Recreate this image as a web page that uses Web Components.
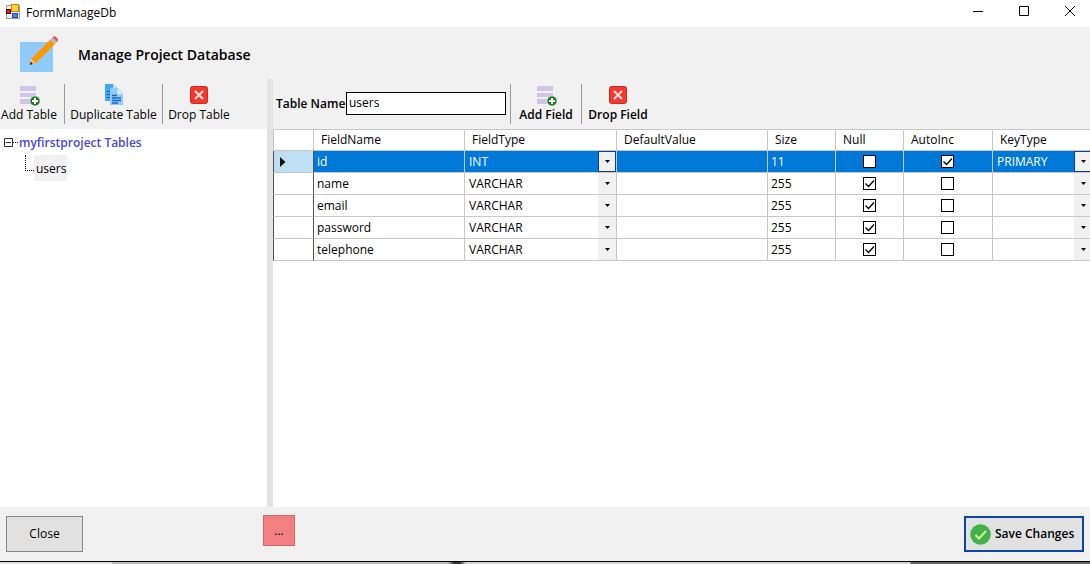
<!DOCTYPE html>
<html lang="en">
<head>
<meta charset="utf-8">
<title>FormManageDb</title>
<style>
html,body{margin:0;height:100%}
body{font:12px/16px "Open Sans","Noto Sans",sans-serif;color:#000;background:#f1f1f1}
</style>
</head>
<body>
<db-window>
  <title-bar slot="title">FormManageDb</title-bar>
  <page-header slot="header">Manage Project Database</page-header>
  <tool-strip slot="side">
    <tool-button icon="add" style="--w:56px">Add Table</tool-button>
    <tool-button icon="copy" style="--w:83px">Duplicate Table</tool-button>
    <tool-button icon="drop" style="--w:58px">Drop Table</tool-button>
  </tool-strip>
  <table-tree slot="side" heading="myfirstproject Tables">users</table-tree>
  <tool-strip slot="main" class="fields">
    <name-field value="users">Table Name</name-field>
    <tool-button icon="add" strong style="--w:56px">Add Field</tool-button>
    <tool-button icon="drop" strong style="--w:58px">Drop Field</tool-button>
  </tool-strip>
  <field-grid slot="main"></field-grid>
  <action-bar slot="footer"></action-bar>
</db-window>
<script>
const define = (name, html, setup) => {
  const t = document.createElement('template');
  t.innerHTML = html;
  customElements.define(name, class extends HTMLElement {
    constructor() {
      super();
      this.attachShadow({mode: 'open'}).append(t.content.cloneNode(true));
    }
    connectedCallback() { if (setup && !this.ready) { this.ready = true; setup(this, this.shadowRoot); } }
  });
};

const icons = {
  add: `<svg width="22" height="22" viewBox="0 0 22 22"><path fill="#d1c4e9" d="M2 2h16v5H2zM2 9h16v4H2zM2 15h16v5H2z"/><circle cx="17" cy="17" r="5" fill="#1b7a22" stroke="#f1f1f1" stroke-width=".6"/><path d="M17 14v6M14 17h6" stroke="#fff" stroke-width="2"/></svg>`,
  copy: `<svg width="22" height="22" viewBox="0 0 22 22"><path fill="#42a5f5" d="M2 0h8l4 4v13H2z"/><path fill="#bbdefb" d="M10 0l4 4h-4z"/><path stroke="#1565c0" d="M4 7.500h4M4 10.500h4M4 13.500h4"/><path fill="#90caf9" d="M7 4h8l5 5v12H7z"/><path fill="#e1f5fe" d="M14.500 4.500L20 10h-5.500z"/><path stroke="#1565c0" stroke-width="1.300" d="M9 11.500h5M9 14h9M9 16.500h9M9 19h6"/></svg>`,
  drop: `<svg width="22" height="22" viewBox="0 0 22 22"><rect x="2.500" y="2.500" width="17" height="17" rx="2" fill="#f4382e" stroke="#d32820"/><path d="M7 7l8 8M15 7l-8 8" stroke="#ffe4e4" stroke-width="2"/></svg>`
};

define('db-window', `<style>
:host{display:flex;flex-direction:column;min-height:100vh}
.work{flex:1;display:grid;grid-template-columns:267px 6px minmax(0,1fr)}
.side,.main{display:flex;flex-direction:column}
.split{background:#e3e3e3}
.main{overflow:hidden}
.behind{height:2px;border-top:1px solid #000;background:linear-gradient(90deg,#ddd 0 112px,#bbb 112px 448px,#333 454px 460px,#d4d4d4 466px 910px,#666 911px)}
</style>
<slot name="title"></slot><slot name="header"></slot>
<div class="work"><div class="side"><slot name="side"></slot></div><div class="split"></div><div class="main"><slot name="main"></slot></div></div>
<slot name="footer"></slot><div class="behind"></div>`);

define('title-bar', `<style>
:host{display:flex;align-items:center;height:27px;background:#fff;padding-left:5px}
.name{flex:1;padding:0 5px;margin-top:-2px}
.logo{margin-top:-4px}
.controls{display:flex;margin-right:-3px}
button{border:0;background:none;padding:0 0 5px;width:46px;height:27px;display:grid;place-items:center}
:host{overflow:hidden}
</style>
<svg class="logo" width="16" height="16" viewBox="0 0 16 16"><path d="M1.500 1.500h13v13h-13z" fill="#ececec" stroke="#9a9a9a"/><rect x="6.500" y=".5" width="7" height="7" fill="#ffcf3f" stroke="#c08a00"/><rect x="1.500" y="5.500" width="4" height="4" fill="#c8232c" stroke="#5e0c10"/><rect x="7.500" y="9.500" width="5" height="4" fill="#4a86e8" stroke="#1d4fa8"/></svg>
<span class="name"><slot></slot></span>
<div class="controls">
<button aria-label="Minimize"><svg width="12" height="12"><path d="M1 6.500h10" stroke="#000"/></svg></button>
<button aria-label="Maximize"><svg width="12" height="12"><path d="M1.500 1.500h9v9h-9z" fill="none" stroke="#000"/></svg></button>
<button aria-label="Close window"><svg width="12" height="12"><path d="M1 1l10 10M11 1L1 11" stroke="#000"/></svg></button>
</div>`);

define('page-header', `<style>
:host{display:flex;align-items:center;gap:18px;box-sizing:border-box;height:52px;padding:4px 0 0 20px}
h1{font-size:14px;font-weight:600;line-height:20px;margin:0}
</style>
<svg width="40" height="38" viewBox="0 0 40 38"><path fill="#90caf9" d="M0 6h33v30H0z"/><path fill="#ff9800" d="M11 23L30.500 3.500l4.500 4.500L15.500 27.500z"/><path fill="#b0bec5" d="M30.500 3.500l2-2L37 6l-2 2z"/><path fill="#e05a66" d="M32.500 1.500l1-1q1-.8 2 0l2.300 2.300q.8 1 0 2L37 6z"/><path fill="#ffc680" d="M11 23l4.500 4.500L10 29z"/><path fill="#222" d="M10.600 25.500l2.300 2.400L10 29z"/></svg>
<h1><slot></slot></h1>`);

define('tool-strip', `<style>
:host{display:flex;align-items:flex-start;height:50px;padding-left:1px}
:host(.fields){padding-left:3px}
::slotted(tool-button:not(:first-child)){border-left:1px solid #999;padding-left:7px}
::slotted(tool-button){margin:5px 7px 0 0}
</style><slot></slot>`);

define('tool-button', `<style>
:host{display:block;height:40px}
button{all:unset;box-sizing:border-box;width:var(--w);height:40px;display:flex;flex-direction:column;align-items:center;gap:1px;white-space:nowrap}
:host([strong]) button{font-weight:600}
.icon,svg{display:block;height:22px}
</style><button><span class="icon"></span><slot></slot></button>`,
(el, root) => { root.querySelector('.icon').innerHTML = icons[el.getAttribute('icon')]; });

define('name-field', `<style>
:host{display:flex;align-items:center;gap:5px;padding:13px 4px 0 0}
label{font-weight:600;width:65px;white-space:nowrap}
input{box-sizing:border-box;width:160px;height:23px;border:1px solid #000;border-radius:0;background:#fff;padding:0 2px 3px;font:inherit;outline:0}
</style><label for="n"><slot></slot></label><input id="n">`,
(el, root) => { root.querySelector('input').value = el.getAttribute('value'); });

define('table-tree', `<style>
:host{display:block;flex:1;background:#fff;padding:5px 0 0 4px}
.root{display:flex;align-items:center;font-weight:600;color:#4d47d6;height:17px}
.dots{width:5px;border-top:1px dotted #000;margin-right:1px}
ul{list-style:none;margin:4px 0 0 21px;padding:0}
li{display:flex}
.branch{width:8px;height:15px;border:dotted #000;border-width:0 0 1px 1px}
.leaf{background:#f1f1f1;padding:6px 1px 4px 2px;height:16px}
</style>
<div class="root"><svg width="9" height="9"><path d="M.5.5h8v8h-8zM2 4.500h5" fill="none" stroke="#333"/></svg><span class="dots"></span><span id="h"></span></div>
<ul><li><span class="branch"></span><span class="leaf"><slot></slot></span></li></ul>`,
(el, root) => { root.getElementById('h').textContent = el.getAttribute('heading'); });

define('grid-combo', `<style>
:host{display:grid;grid-template-columns:minmax(0,1fr) 18px;height:21px}
select{appearance:none;grid-area:1/1/2/3;border:0;background:none;color:inherit;font:inherit;padding:0 20px 0 4px;border-radius:0;outline:0;width:100%;min-width:0}
.arrow{grid-area:1/2;box-sizing:border-box;background:#f1f1f1;display:grid;place-items:center;pointer-events:none}
:host([active]) .arrow{border:1px solid #0a3f9c}
</style><select></select><span class="arrow"><svg width="5" height="3"><path d="M0 0h5L2.500 3z"/></svg></span>`,
(el, root) => {
  const s = root.querySelector('select');
  s.add(new Option(el.getAttribute('value')));
  s.setAttribute('aria-label', el.getAttribute('label'));
});

define('grid-check', `<style>
:host{display:grid;place-items:center;height:21px}
input{appearance:none;margin:0;width:13px;height:13px;border:1px solid #000;background:#fff;grid-area:1/1}
svg{grid-area:1/1;display:none;pointer-events:none}
input:checked+svg{display:block}
</style><input type="checkbox"><svg width="13" height="13"><path d="M2.500 6.500l3 3L11 3.500" fill="none" stroke="#000" stroke-width="1.300"/></svg>`,
(el, root) => {
  const i = root.querySelector('input');
  i.checked = el.hasAttribute('checked');
  i.setAttribute('aria-label', el.getAttribute('label'));
});

define('field-grid', `<style>
:host{display:block;flex:1;background:#fff;border-top:1px solid #c8c8c8}
table{table-layout:fixed;border-collapse:separate;border-spacing:0;width:calc(100% + 2px)}
th,td{box-sizing:border-box;padding:0;height:22px;border:solid #c8c8c8;border-width:0 1px 1px 0;text-align:left;font-weight:400;white-space:nowrap}
thead th{height:21px;padding-left:7px}
th:last-child,td:last-child{border-right:0}
tbody th{border-right-color:#555;border-left:1px solid #555}
thead th:first-child{border-left:1px solid #c8c8c8}
td.text{padding-left:3px}
td.tick{padding-right:1px}
tr.current td{background:#0078d7;color:#fff}
tr.current th{background:#bfdff5}
tr.current svg{display:block;margin-left:6px}
</style>
<table><colgroup><col style="width:41px"><col style="width:151px"><col style="width:152px"><col style="width:151px"><col style="width:68px"><col style="width:68px"><col style="width:89px"><col></colgroup>
<thead><tr><th></th><th>FieldName</th><th>FieldType</th><th>DefaultValue</th><th>Size</th><th>Null</th><th>AutoInc</th><th>KeyType</th></tr></thead><tbody></tbody></table>`,
(el, root) => {
  const rows = [['id','INT','11',0,1,'PRIMARY'],['name','VARCHAR','255',1,0,''],['email','VARCHAR','255',1,0,''],['password','VARCHAR','255',1,0,''],['telephone','VARCHAR','255',1,0,'']];
  root.querySelector('tbody').innerHTML = rows.map(([n, t, s, nul, inc, key], i) => {
    const act = i ? '' : 'active', on = v => v ? 'checked' : '';
    return `<tr class="${i ? '' : 'current'}"><th>${i ? '' : '<svg width="6" height="10"><path d="M0 0l5.500 5L0 10z" fill="#111"/></svg>'}</th>
<td class="text">${n}</td><td><grid-combo ${act} value="${t}" label="${n} type"></grid-combo></td><td></td><td class="text">${s}</td>
<td class="tick"><grid-check ${on(nul)} label="${n} null"></grid-check></td><td class="tick"><grid-check ${on(inc)} label="${n} auto increment"></grid-check></td>
<td><grid-combo ${act} value="${key}" label="${n} key type"></grid-combo></td></tr>`;
  }).join('');
});

define('action-bar', `<style>
:host{display:grid;grid-template-columns:257px 1fr auto;align-items:start;height:45px;padding:9px 6px 0}
button{box-sizing:border-box;font:inherit;color:#000;border-radius:0;background:#e1e1e1;padding:0}
.close{width:77px;height:36px;border:1px solid #888}
.more{width:32px;height:31px;background:#f28080;border:1px solid #d86464;margin-top:-1px}
.save{width:120px;height:36px;border:2px solid #0a46a6;font-weight:600;display:flex;align-items:center;gap:4px;padding-left:4px;white-space:nowrap}
</style>
<div><button class="close">Close</button></div><div><button class="more">...</button></div>
<button class="save"><svg width="21" height="21" viewBox="0 0 21 21"><circle cx="10.500" cy="10.500" r="10.300" fill="#43b04a"/><path d="M5.500 11l3.500 3.500L16 7" fill="none" stroke="#ccff90" stroke-width="2"/></svg>Save Changes</button>`);
</script>
</body>
</html>
